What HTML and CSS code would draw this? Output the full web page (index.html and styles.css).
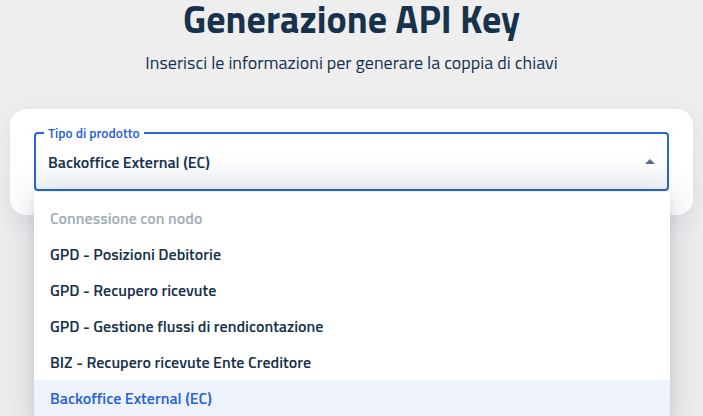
FILE: index.html
```html
<!DOCTYPE html>
<html lang="it">
<head>
<meta charset="utf-8">
<title>Generazione API Key</title>
<link rel="stylesheet" href="styles.css">
</head>
<body>
<main class="page">
  <header class="head">
    <h1 class="title">Generazione API Key</h1>
    <p class="subtitle">Inserisci le informazioni per generare la coppia di chiavi</p>
  </header>
  <section class="card">
    <div class="field">
      <fieldset class="outline"><legend class="legend">Tipo di prodotto</legend></fieldset>
      <div class="value">Backoffice External (EC)</div>
      <svg class="arrow" viewBox="0 0 24 24" width="24" height="24"><path d="M7 14l5-5 5 5z" fill="#5C6F82"/></svg>
      <ul class="menu">
        <li class="item disabled">Connessione con nodo</li>
        <li class="item">GPD - Posizioni Debitorie</li>
        <li class="item">GPD - Recupero ricevute</li>
        <li class="item">GPD - Gestione flussi di rendicontazione</li>
        <li class="item">BIZ - Recupero ricevute Ente Creditore</li>
        <li class="item selected">Backoffice External (EC)</li>
      </ul>
    </div>
  </section>
</main>
</body>
</html>
```
FILE: styles.css
```css
html, body {
  margin: 0;
  padding: 0;
  height: 100%;
  overflow: hidden;
}
body {
  background: #eeeeee;
  font-family: "Titillium Web", "Lato", sans-serif;
  color: #17324d;
}
.page {
  padding: 0 10px;
}
.head {
  text-align: center;
}
.title {
  margin: 0;
  font-size: 38px;
  line-height: 38px;
  font-weight: 700;
  color: #17324d;
}
.subtitle {
  margin: 13px 0 0;
  font-size: 18px;
  line-height: 24px;
  font-weight: 400;
}
.card {
  margin-top: 34px;
  background: #ffffff;
  border-radius: 16px;
  padding: 24px;
  box-shadow: 0 6px 24px rgba(0, 43, 85, 0.08);
}
.field {
  position: relative;
  height: 58px;
  background: linear-gradient(#ffffff 40%, #f3f5f8);
  border-radius: 4px;
}
.outline {
  position: absolute;
  inset: 0;
  margin: 0;
  padding: 0 8px;
  border: 2px solid #2b63d8;
  border-radius: 4px;
  top: -8px;
}
.legend {
  padding: 0 4px;
  font-size: 13.5px;
  line-height: 16px;
  font-weight: 600;
  color: #2b63d8;
}
.value {
  position: relative;
  padding: 0 14px;
  height: 58px;
  display: flex;
  align-items: center;
  font-size: 16px;
  font-weight: 600;
  color: #17324d;
}
.arrow {
  position: absolute;
  right: 7px;
  top: 17px;
}
.menu {
  position: absolute;
  left: 0;
  right: -1px;
  top: 59px;
  margin: 0;
  padding: 8px 0;
  list-style: none;
  background: #ffffff;
  border-radius: 4px;
  box-shadow: 0 5px 5px -3px rgba(0, 43, 85, 0.12), 0 8px 10px 1px rgba(0, 43, 85, 0.08), 0 3px 34px 6px rgba(0, 43, 85, 0.12);
}
.item {
  height: 36px;
  display: flex;
  align-items: center;
  padding: 0 16px;
  font-size: 16px;
  font-weight: 600;
  color: #17324d;
}
.item.disabled {
  color: #a2adb8;
}
.item.selected {
  background: #eef3fb;
  color: #2b63d8;
}
```
